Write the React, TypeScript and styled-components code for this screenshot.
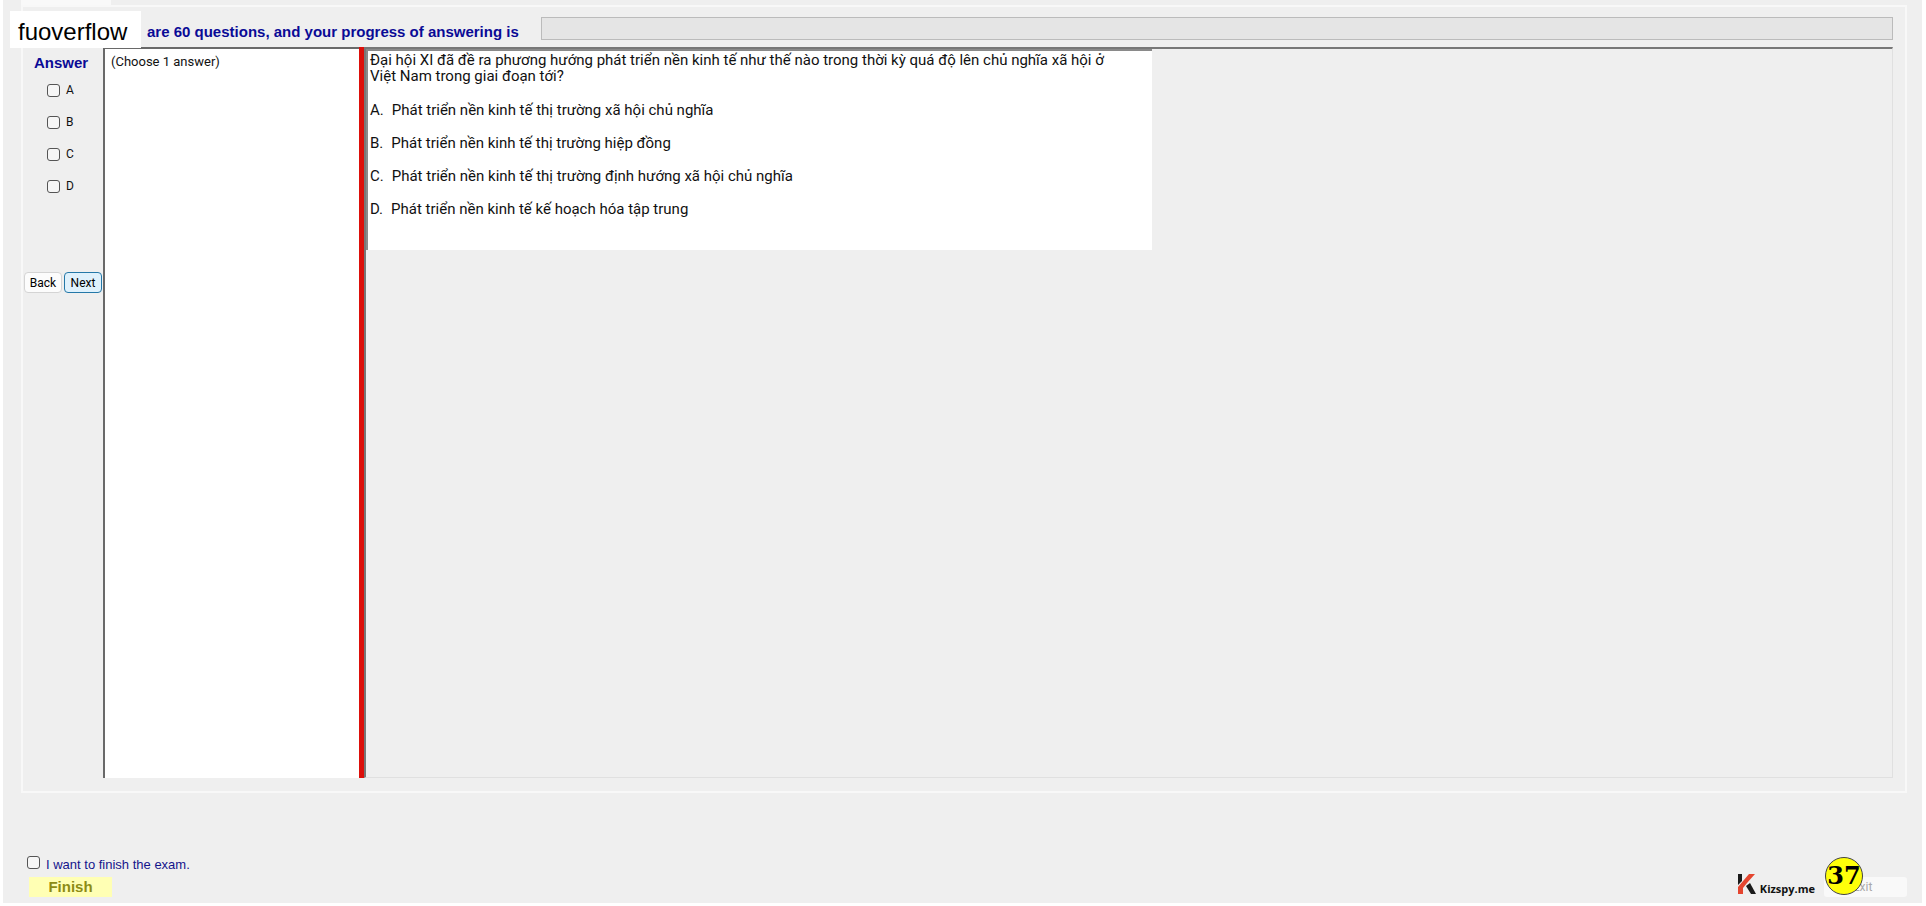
import React from 'react';
import styled, { createGlobalStyle } from 'styled-components';

const Global = createGlobalStyle`
  *, *::before, *::after { box-sizing: border-box; }
  html, body, #root { height: 100%; }
  body { margin: 0; background: #fff; color: #111; font-family: "Liberation Sans", Arial, sans-serif; }
  button, input { font: inherit; margin: 0; }
`;

const Page = styled.div`
  min-height: 100%;
  display: flex;
  padding: 0 4px 3px 3px;
`;

const ExamWindow = styled.main`
  flex: 1;
  display: flex;
  flex-direction: column;
  position: relative;
  padding: 0 15px 6px 18px;
  background: #efefef;
`;

const TabStub = styled.div`
  width: 90px;
  height: 5px;
  background: #f9f9f9;
`;

const GroupBox = styled.section`
  flex: 1;
  display: flex;
  flex-direction: column;
  padding: 10px 12px 13px 0;
  border: 2px solid #f8f8f8;
`;

const StatusRow = styled.header`
  display: flex;
  align-items: flex-start;
  height: 30px;
`;

const SiteTag = styled.div`
  position: absolute;
  left: 7px;
  top: 11px;
  width: 131px;
  height: 37px;
  padding-left: 8px;
  background: #fff;
  color: #000;
  font-size: 24px;
  line-height: 42px;
  white-space: nowrap;
`;

const StatusText = styled.h1`
  width: 394px;
  margin: 0 0 0 124px;
  font-size: 15px;
  line-height: 30px;
  font-weight: 700;
  color: #0a0a96;
  white-space: nowrap;
`;

const ProgressTrack = styled.div`
  flex: 1;
  height: 23px;
  border: 1px solid #bbb;
  background: #e5e5e5;
`;

const Columns = styled.div`
  flex: 1;
  display: flex;
`;

const AnswerColumn = styled.aside`
  width: 80px;
  display: flex;
  flex-direction: column;
`;

const AnswerTitle = styled.h2`
  margin: 6px 4px 9px 0;
  font-size: 15px;
  line-height: 20px;
  text-align: center;
  color: #0a0a96;
`;

const ChoiceList = styled.div`
  display: flex;
  flex-direction: column;
  gap: 16px;
  padding-left: 24px;
`;

const ChoiceLabel = styled.label`
  display: flex;
  align-items: center;
  gap: 6px;
  height: 16px;
  font-family: Roboto, sans-serif;
  font-size: 12px;
`;

const Check = styled.input.attrs({ type: 'checkbox' })`
  appearance: none;
  width: 13px;
  height: 13px;
  border: 1px solid #555;
  border-radius: 3px;
  background: #f6f6f6;
`;

const NavRow = styled.nav`
  display: flex;
  gap: 2px;
  margin-top: 78px;
  padding-left: 1px;
`;

const NavButton = styled.button<{ $active?: boolean }>`
  width: 38px;
  height: 21px;
  padding: 0;
  border: 1px solid ${(p) => (p.$active ? '#2478a8' : '#d4d4d4')};
  border-radius: 4px;
  background: ${(p) => (p.$active ? '#dff1fc' : '#fcfcfc')};
  font-family: Roboto, sans-serif;
  font-size: 12px;
`;

const InstructionPane = styled.section`
  width: 256px;
  padding: 5px 6px;
  border: 0 solid #696969;
  border-width: 2px 0 0 2px;
  background: #fff;
  font-family: Roboto, sans-serif;
  font-size: 13px;
  line-height: 16px;
`;

const Splitter = styled.div`
  width: 5px;
  background: #dc0f0a;
`;

const QuestionPane = styled.section`
  flex: 1;
  border: 1px solid #e0e0e0;
  border-top: 2px solid #777;
  border-left: 2px solid #777;
`;

const QuestionCard = styled.article`
  width: 786px;
  height: 201px;
  padding: 1px 0 0 2px;
  border: 0 solid #8a8a8a;
  border-width: 2px 0 0 2px;
  background: #fff;
  font-family: Roboto, sans-serif;
  font-size: 15px;
  line-height: 16px;
`;

const Prompt = styled.p`
  margin: 0 0 18px;
  white-space: pre-line;
`;

const Option = styled.p`
  display: flex;
  gap: 8px;
  margin: 0 0 17px;
`;

const Footer = styled.footer`
  display: flex;
  justify-content: space-between;
  align-items: flex-end;
  padding: 63px 0 0 6px;
`;

const FinishBlock = styled.div`
  display: flex;
  flex-direction: column;
  align-items: flex-start;
  gap: 3px;
`;

const FinishLabel = styled.label`
  display: flex;
  align-items: flex-start;
  gap: 6px;
  height: 18px;
  font-size: 13px;
  line-height: 18px;
  color: #14148c;
`;

const FinishButton = styled.button`
  width: 83px;
  height: 20px;
  margin-left: 2px;
  padding: 0;
  border: 0;
  background: #ffffb4;
  color: #8c8c14;
  font-size: 15px;
  line-height: 20px;
  font-weight: 700;
`;

const FooterRight = styled.div`
  display: flex;
  align-items: flex-end;
  position: relative;
`;

const Brand = styled.a`
  display: flex;
  align-items: flex-end;
  gap: 4px;
  margin-right: 9px;
  color: #111;
  font: 700 11px/16px "Open Sans", sans-serif;
  text-decoration: none;
`;

const BrandMark = styled.svg`
  width: 18px;
  height: 20px;
  margin-bottom: 3px;
`;

const ExitButton = styled.button`
  width: 83px;
  height: 20px;
  padding: 0 6px 0 0;
  border: 0;
  border-radius: 3px;
  background: #f9f9f9;
  color: #aaa;
  font-family: Roboto, sans-serif;
  font-size: 12px;
`;

const CountBadge = styled.span`
  position: absolute;
  right: 44px;
  bottom: 2px;
  width: 38px;
  height: 38px;
  border: 1px solid #444;
  border-radius: 50%;
  background: #ffff0a;
  color: #000;
  font: 700 24px/36px "DejaVu Serif", serif;
  text-align: center;
`;

const options = [
  ['A.', 'Phát triển nền kinh tế thị trường xã hội chủ nghĩa'],
  ['B.', 'Phát triển nền kinh tế thị trường hiệp đồng'],
  ['C.', 'Phát triển nền kinh tế thị trường định hướng xã hội chủ nghĩa'],
  ['D.', 'Phát triển nền kinh tế kế hoạch hóa tập trung'],
];

export default function App() {
  return (
    <Page>
      <Global />
      <ExamWindow>
        <TabStub />
        <GroupBox>
          <StatusRow>
            <StatusText>are 60 questions, and your progress of answering is</StatusText>
            <ProgressTrack role="progressbar" aria-label="Answering progress" aria-valuenow={0} />
          </StatusRow>
          <Columns>
            <AnswerColumn>
              <AnswerTitle>Answer</AnswerTitle>
              <ChoiceList>
                {['A', 'B', 'C', 'D'].map((letter) => (
                  <ChoiceLabel key={letter}><Check />{letter}</ChoiceLabel>
                ))}
              </ChoiceList>
              <NavRow>
                <NavButton>Back</NavButton>
                <NavButton $active>Next</NavButton>
              </NavRow>
            </AnswerColumn>
            <InstructionPane>(Choose 1 answer)</InstructionPane>
            <Splitter />
            <QuestionPane>
              <QuestionCard>
                <Prompt>
                  {'Đại hội XI đã đề ra phương hướng phát triển nền kinh tế như thế nào trong thời kỳ quá độ lên chủ nghĩa xã hội ở\nViệt Nam trong giai đoạn tới?'}
                </Prompt>
                {options.map(([key, text]) => (
                  <Option key={key}><span>{key}</span><span>{text}</span></Option>
                ))}
              </QuestionCard>
            </QuestionPane>
          </Columns>
        </GroupBox>
        <Footer>
          <FinishBlock>
            <FinishLabel><Check />I want to finish the exam.</FinishLabel>
            <FinishButton>Finish</FinishButton>
          </FinishBlock>
          <FooterRight>
            <Brand href="#">
              <BrandMark viewBox="0 0 18 20" aria-hidden="true">
                <path d="M0 0h4v7l-4 4z" fill="#1a1a1a" />
                <path d="M11 0h6L9 9 5 14v6H0v-7z" fill="#e5452f" />
                <path d="M8 12l4-3 6 11h-5z" fill="#1a1a1a" />
              </BrandMark>
              Kizspy.me
            </Brand>
            <ExitButton>Exit</ExitButton>
            <CountBadge>37</CountBadge>
          </FooterRight>
        </Footer>
        <SiteTag>fuoverflow</SiteTag>
      </ExamWindow>
    </Page>
  );
}
